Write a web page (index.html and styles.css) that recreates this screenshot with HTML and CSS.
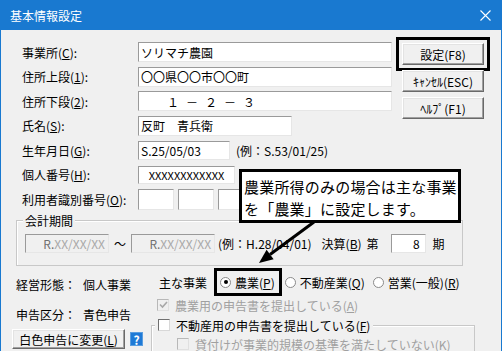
FILE: index.html
```html
<!DOCTYPE html>
<html lang="ja">
<head>
    <meta charset="UTF-8">
    <title>基本情報設定</title>
    <link rel="stylesheet" href="styles.css">
</head>
<body>
    <div class="window">
        <div class="titlebar">
            <span class="title">基本情報設定</span>
            <svg class="close" width="11" height="11" viewBox="0 0 11 11">
                <path d="M0.5 0.5 L10.5 10.5 M10.5 0.5 L0.5 10.5" stroke="#fff" stroke-width="1.1" fill="none"/>
            </svg>
        </div>

        <div class="body">
            <div class="top">
                <div class="form">
                    <div class="row">
                        <span class="lbl">事業所(<u>C</u>):</span>
                        <input class="field w-full" value="ソリマチ農園">
                    </div>
                    <div class="row">
                        <span class="lbl">住所上段(<u>1</u>):</span>
                        <input class="field w-full" value="〇〇県〇〇市〇〇町">
                    </div>
                    <div class="row">
                        <span class="lbl">住所下段(<u>2</u>):</span>
                        <input class="field w-full spaced" value="１－２－３">
                    </div>
                    <div class="row">
                        <span class="lbl">氏名(<u>S</u>):</span>
                        <input class="field w-name" value="反町　青兵衛">
                    </div>
                    <div class="row">
                        <span class="lbl">生年月日(<u>G</u>):</span>
                        <input class="field w-date" value="S.25/05/03">
                        <span class="hint">(例：S.53/01/25)</span>
                    </div>
                    <div class="row">
                        <span class="lbl">個人番号(<u>H</u>):</span>
                        <input class="field w-mynum" value="XXXXXXXXXXXX">
                    </div>
                    <div class="row">
                        <span class="lbl">利用者識別番号(<u>O</u>):</span>
                        <div class="id-boxes">
                            <input class="field w-id">
                            <input class="field w-id">
                            <input class="field w-id">
                            <input class="field w-id">
                        </div>
                    </div>
                </div>

                <div class="buttons">
                    <button class="btn marked">設定(F8)</button>
                    <button class="btn">ｷｬﾝｾﾙ(ESC)</button>
                    <button class="btn">ﾍﾙﾌﾟ(F1)</button>
                </div>
            </div>

            <!-- 会計期間 -->
            <div class="group period">
                <span class="group-title">会計期間</span>
                <div class="period-row">
                    <div class="field disabled w-period"><span class="dark">R.</span>XX/XX/XX</div>
                    <span class="tilde">～</span>
                    <div class="field disabled w-period"><span class="dark">R.</span>XX/XX/XX</div>
                    <span class="note">(例：H.28/04/01)</span>
                    <span>決算(<u>B</u>)</span>
                    <span class="dai">第</span>
                    <input class="field w-term" value="8">
                    <span class="ki">期</span>
                </div>
            </div>

            <div class="bottom">
                <div class="left-col">
                    <div class="kv first"><span class="k">経営形態：</span><span>個人事業</span></div>
                    <div class="kv"><span class="k">申告区分：</span><span>青色申告</span></div>
                    <div class="change">
                        <button class="btn btn-change">白色申告に変更(<u>L</u>)</button>
                        <span class="help-icon">?</span>
                    </div>
                </div>

                <div class="right-col">
                    <div class="main-biz">
                        <span>主な事業</span>
                        <label class="radio-item marked"><span class="radio on"></span><span>農業(<u>P</u>)</span></label>
                        <label class="radio-item"><span class="radio"></span><span>不動産業(<u>Q</u>)</span></label>
                        <label class="radio-item"><span class="radio"></span><span>営業(一般)(<u>R</u>)</span></label>
                    </div>
                    <div class="check-row disabled-text">
                        <span class="check off">
                            <svg width="9" height="8" viewBox="0 0 9 8"><path d="M1 3.5 L3.5 6 L8 1" stroke="#a8a8a8" stroke-width="1.6" fill="none"/></svg>
                        </span>
                        <span>農業用の申告書を提出している(<u>A</u>)</span>
                    </div>
                    <div class="group subgroup">
                        <div class="check-row sub-title">
                            <span class="check"></span>
                            <span>不動産用の申告書を提出している(<u>F</u>)</span>
                        </div>
                        <div class="check-row inner disabled-text">
                            <span class="check off"></span>
                            <span>貸付けが事業的規模の基準を満たしていない(<u>K</u>)</span>
                        </div>
                    </div>
                </div>
            </div>
        </div>

        <!-- 吹き出し -->
        <div class="callout">
            農業所得のみの場合は主な事業<br>
            を「農業」に設定します。
        </div>
        <svg class="arrow" width="502" height="351" viewBox="0 0 502 351">
            <path d="M314 222 L270 254.5" stroke="#000" stroke-width="3" fill="none"/>
            <polygon points="259,263 273.6,259.2 266.6,249.8" fill="#000"/>
        </svg>
    </div>
</body>
</html>
```

FILE: styles.css
```css
body {
    margin: 0;
    font-family: "Noto Sans CJK JP", sans-serif;
    font-size: 12px;
    color: #000;
}

.window {
    position: relative;
    width: 502px;
    height: 351px;
    overflow: hidden;
    background: #f0f0f0;
}

.titlebar {
    height: 30px;
    background: #1979d0;
    color: #fff;
    display: flex;
    align-items: center;
    justify-content: space-between;
    padding: 0 11px 0 10px;
}

.body {
    height: 321px;
    box-sizing: border-box;
    border-left: 1px solid #1979d0;
    border-right: 1px solid #1979d0;
    padding: 12px 0 0 15px;
}

/* 上段フォーム */
.top {
    display: flex;
    margin-left: 6px;
}

.form {
    width: 370px;
    display: flex;
    flex-direction: column;
    gap: 4.5px;
}

.row {
    display: flex;
    align-items: center;
    height: 20px;
}

.lbl {
    width: 116px;
    flex: none;
}

.field {
    height: 20px;
    box-sizing: border-box;
    border: 1px solid;
    border-color: #9a9a9a #e6e6e6 #e6e6e6 #9a9a9a;
    background: #fff;
    font: inherit;
    color: #000;
    padding: 0 2px;
    outline: none;
}

.w-full { width: 254px; }
.w-name { width: 154px; }
.w-date { width: 92px; height: 19px; }
.w-mynum { width: 97px; height: 18px; text-align: center; font-size: 11px; }
.w-id { width: 36px; height: 21px; }

.spaced {
    letter-spacing: 7px;
    text-indent: 26px;
}

.hint {
    margin-left: 6px;
}

.id-boxes {
    display: flex;
    gap: 4px;
}

.buttons {
    margin-left: 10px;
    padding-top: 1px;
    display: flex;
    flex-direction: column;
    gap: 5px;
}

.btn {
    width: 82px;
    height: 22px;
    padding: 0;
    font: inherit;
    color: #000;
    background: #f0f0f0;
    border: 1px solid;
    border-color: #fff #696969 #696969 #fff;
    box-shadow: inset -1px -1px #a0a0a0, inset 1px 1px #e3e3e3;
}

.marked {
    outline: 3px solid #000;
    outline-offset: 3px;
}

/* グループ枠 */
.group {
    position: relative;
    border: 1px solid #c8c8c8;
    box-shadow: inset 1px 1px #fff;
}

.group-title {
    position: absolute;
    top: -9px;
    left: 6px;
    padding: 0 2px;
    line-height: 17px;
    background: #f0f0f0;
}

.period {
    margin-top: 11px;
    width: 447px;
    height: 46px;
    box-sizing: border-box;
    padding: 13px 0 0 8px;
}

.period-row {
    display: flex;
    align-items: center;
    height: 19px;
}

.disabled {
    background: #f0f0f0;
    color: #a8a8a8;
    text-align: right;
    line-height: 17px;
    padding-right: 3px;
}

.disabled .dark {
    color: #707070;
}

.w-period { width: 84px; height: 19px; }
.w-term { width: 35px; height: 19px; text-align: right; padding-right: 5px; }

.tilde { margin: 0 5px; }
.note { margin: 0 10px 0 3px; }
.dai { margin: 0 12px 0 5px; }
.ki { margin-left: 7px; }

/* 下段 */
.bottom {
    display: grid;
    grid-template-columns: 135px 324px;
}

.kv {
    display: flex;
    height: 18px;
    align-items: center;
    margin-top: 12px;
}

.kv.first {
    margin-top: 9px;
}

.kv .k {
    width: 67px;
}

.change {
    display: flex;
    align-items: center;
    margin: 6px 0 0 -4px;
}

.btn-change {
    width: 113px;
    height: 20px;
}

.help-icon {
    margin-left: 5px;
    width: 13px;
    height: 14px;
    background: #1f7ad6;
    color: #fff;
    font-weight: bold;
    font-size: 12px;
    line-height: 14px;
    text-align: center;
    border: 1px solid #5a9ee0;
    box-sizing: border-box;
}

.main-biz {
    display: flex;
    align-items: center;
    height: 26px;
    margin-top: 3px;
    padding-left: 8px;
    gap: 5px;
    white-space: nowrap;
}

.main-biz > * {
    flex: none;
}

.radio-item {
    display: inline-flex;
    align-items: center;
    gap: 4px;
    height: 18px;
    padding: 0 2px 0 1px;
}

.radio-item.marked {
    margin-left: 7px;
    margin-right: 2px;
    outline-offset: 2px;
}

.radio {
    width: 11px;
    height: 11px;
    box-sizing: border-box;
    border-radius: 50%;
    border: 1px solid #8a8a8a;
    background: #fff;
    display: inline-flex;
    align-items: center;
    justify-content: center;
}

.radio.on::after {
    content: "";
    width: 4px;
    height: 4px;
    border-radius: 50%;
    background: #000;
}

.check-row {
    display: flex;
    align-items: center;
    gap: 6px;
    height: 18px;
    padding-left: 6px;
    margin-top: 1px;
    white-space: nowrap;
}

.disabled-text {
    color: #a0a0a0;
}

.check {
    flex: none;
    width: 12px;
    height: 12px;
    box-sizing: border-box;
    border: 1px solid;
    border-color: #707070 #d8d8d8 #d8d8d8 #707070;
    background: #fff;
    display: inline-flex;
    align-items: center;
    justify-content: center;
}

.check.off {
    border-color: #b8b8b8 #e0e0e0 #e0e0e0 #b8b8b8;
    background: #f0f0f0;
}

.subgroup {
    margin-top: 11px;
    height: 60px;
    padding-top: 9px;
    box-sizing: border-box;
}

.sub-title {
    position: absolute;
    top: -10px;
    left: 3px;
    margin: 0;
    padding: 0 3px;
    background: #f0f0f0;
}

.check-row.inner {
    padding-left: 25px;
    margin-top: 0;
}

/* 吹き出し */
.callout {
    position: absolute;
    left: 239px;
    top: 169px;
    width: 222px;
    height: 54px;
    box-sizing: border-box;
    border: 3px solid #000;
    background: #fff;
    font-size: 15px;
    line-height: 22px;
    letter-spacing: 0.2px;
    padding: 4px 0 0 2px;
}

.arrow {
    position: absolute;
    left: 0;
    top: 0;
    pointer-events: none;
}
```
